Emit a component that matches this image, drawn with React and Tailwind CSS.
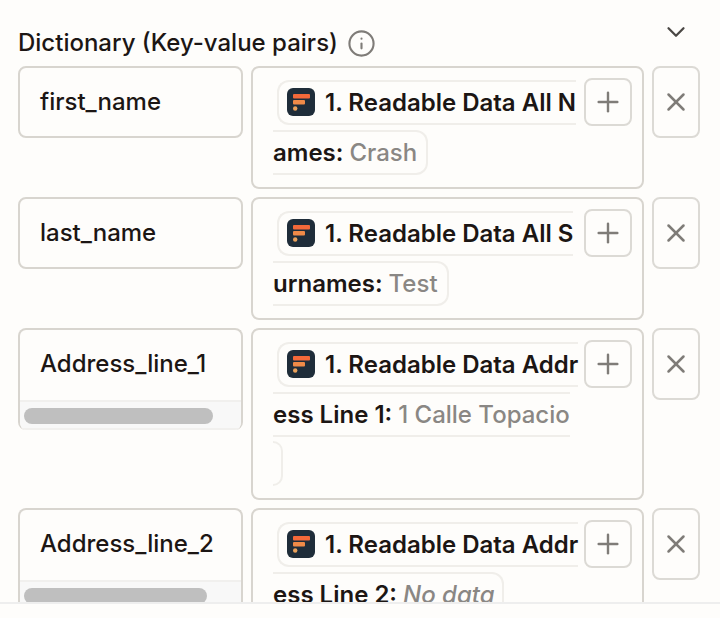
import { ChevronDown, Info, Plus, X } from "lucide-react";

const rows = [
  { name: "first_name", title: "1. Readable Data All N", rest: "ames:", value: "Crash" },
  { name: "last_name", title: "1. Readable Data All S", rest: "urnames:", value: "Test" },
  { name: "Address_line_1", title: "1. Readable Data Addr", rest: "ess Line 1:", value: "1 Calle Topacio", thumb: "w-[189px]", wrapped: true },
  { name: "Address_line_2", title: "1. Readable Data Addr", rest: "ess Line 2:", value: "No data", thumb: "w-[183px]", italic: true },
];

const Logo = () => (
  <svg width="28" height="28" viewBox="0 0 28 28" className="shrink-0">
    <rect width="28" height="28" rx="6" fill="#1f2d3a" />
    <rect x="6" y="6" width="17" height="4.5" rx="1" fill="#f4693a" />
    <rect x="6" y="12" width="12" height="4.5" rx="1" fill="#f08a48" />
    <circle cx="8.2" cy="20.5" r="2.2" fill="#eba25c" />
  </svg>
);

const KeyField = ({ name, thumb }) => (
  <div className={`w-[225px] shrink-0 overflow-hidden rounded-lg border-x-2 border-t-2 border-[#d8d5cf] ${thumb ? "" : "border-b-2"}`}>
    <div className={`flex items-center pl-5 text-[24px] font-medium leading-none text-[#1c1614] ${thumb ? "h-[70px] pb-[3px]" : "h-[68px] pb-[1px]"}`}>{name}</div>
    {thumb && (
      <div className="-mx-[2px] h-[30px] border-y-2 border-[#f1f0ee] bg-[#f8f8f8] pl-[6px] pt-[6px]">
        <div className={`h-4 rounded-full bg-[#bfbfbf] ${thumb}`} />
      </div>
    )}
  </div>
);

const ValueField = ({ title, rest, value, italic, wrapped }) => (
  <div className="min-w-0 flex-1 rounded-lg border-2 border-[#d8d5cf] pb-3 pl-5 pr-[10px] pt-[10px] text-[24px] leading-none">
    <div className="flex items-center justify-between">
      <div className="ml-1 flex h-[45px] items-center gap-[10px] whitespace-nowrap rounded-l-xl border-y-2 border-l-2 border-[#f0eeea] pl-2 font-semibold text-[#1c1614]">
        <Logo />
        <span className="pt-[1px]">{title}</span>
      </div>
      <button className="flex h-12 w-12 shrink-0 items-center justify-center rounded-lg border-2 border-[#dcdad5] text-[#7f7c78]">
        <Plus size={32} strokeWidth={1.8} />
      </button>
    </div>
    <div className={`mt-1 flex h-[45px] w-fit items-center gap-[6px] whitespace-nowrap border-y-2 border-[#f0eeea] ${wrapped ? "" : "rounded-r-xl border-r-2"} ${italic ? "pr-[7px]" : wrapped ? "" : "pr-[9px]"}`}>
      <span className="font-semibold text-[#1c1614]">{rest}</span>
      <span className={`font-medium text-[#8a8784] ${italic ? "italic" : ""}`}>{value}</span>
    </div>
    {wrapped && <div className="mt-1 h-[45px] w-[10px] rounded-r-xl border-y-2 border-r-2 border-[#f0eeea]" />}
  </div>
);

export default function App() {
  return (
    <div className="flex h-[618px] w-[720px] flex-col overflow-hidden bg-[#fefdfb] font-['Inter',sans-serif]">
      <div className="min-h-0 flex-1 overflow-hidden px-[18px] pt-4">
        <div className="mb-[9px] flex h-[41px] items-center justify-between">
          <div className="mt-[13px] flex items-center gap-[9px] text-[24px] font-medium text-[#1c1614]">
            Dictionary (Key-value pairs)
            <Info size={29} strokeWidth={1.75} className="text-[#7f7c78]" />
          </div>
          <ChevronDown size={30} strokeWidth={1.8} className="-mt-[9px] mr-[11px] text-[#4a4744]" />
        </div>
        <div className="flex flex-col gap-2">
          {rows.map((row) => (
            <div key={row.name} className="flex items-start gap-2 pr-[2px]">
              <KeyField name={row.name} thumb={row.thumb} />
              <ValueField {...row} />
              <button className="flex h-[72px] w-12 shrink-0 items-center justify-center rounded-lg border-2 border-[#dcdad5] text-[#7f7c78]">
                <X size={30} strokeWidth={2} />
              </button>
            </div>
          ))}
        </div>
      </div>
      <div className="h-4 shrink-0 border-t-2 border-[#eeeeee] bg-[#fefdfb]" />
    </div>
  );
}
